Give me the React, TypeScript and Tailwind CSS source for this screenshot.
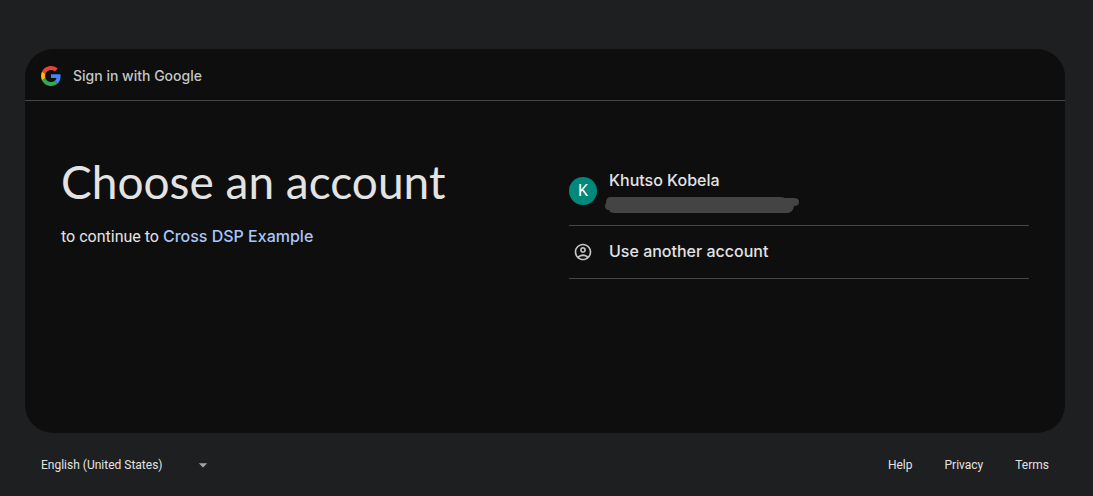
import { MdArrowDropDown, MdOutlineAccountCircle } from "react-icons/md";

function GoogleLogo() {
  return (
    <svg viewBox="0 0 48 48" className="size-5 shrink-0" aria-hidden="true">
      <path fill="#EA4335" d="M24 9.5c3.54 0 6.71 1.22 9.21 3.6l6.85-6.85C35.9 2.38 30.47 0 24 0 14.62 0 6.51 5.38 2.56 13.22l7.98 6.19C12.43 13.72 17.74 9.5 24 9.5z" />
      <path fill="#4285F4" d="M46.98 24.55c0-1.57-.15-3.09-.38-4.55H24v9.02h12.94c-.58 2.96-2.26 5.48-4.78 7.18l7.73 6c4.51-4.18 7.09-10.36 7.09-17.65z" />
      <path fill="#FBBC05" d="M10.53 28.59c-.48-1.45-.76-2.99-.76-4.59s.27-3.14.76-4.59l-7.98-6.19C.92 16.46 0 20.12 0 24c0 3.88.92 7.54 2.56 10.78l7.97-6.19z" />
      <path fill="#34A853" d="M24 48c6.48 0 11.93-2.13 15.89-5.81l-7.73-6c-2.15 1.45-4.92 2.3-8.16 2.3-6.26 0-11.57-4.22-13.47-9.91l-7.98 6.19C6.51 42.62 14.62 48 24 48z" />
    </svg>
  );
}

function HiddenEmail() {
  return (
    <svg viewBox="0 0 194 16" className="-ml-1 h-4 w-[194px]" aria-hidden="true">
      <path
        fill="#444444"
        d="M5 0H174Q178 0 180 1H189Q194 1 194 5Q194 9 189 9Q188 16 182 16H9Q5 16 4 13Q0 13 0 9Q0 7 1 6Q1 0 5 0Z"
      />
    </svg>
  );
}

function AccountList() {
  return (
    <ul className="text-base font-medium text-[#e3e3e3]">
      <li className="border-b border-[#444746]">
        <button type="button" className="flex w-full items-center gap-3 py-3 text-left">
          <span className="flex size-7 shrink-0 items-center justify-center rounded-full bg-[#00897b] font-['Roboto',sans-serif] text-base font-normal text-white">
            K
          </span>
          <span className="flex flex-col gap-1.5">
            <span className="leading-[22px]">Khutso Kobela</span>
            <HiddenEmail />
          </span>
        </button>
      </li>
      <li className="border-b border-[#444746]">
        <button type="button" className="flex h-[52px] w-full items-center gap-3 text-left">
          <span className="flex w-7 shrink-0 justify-center">
            <MdOutlineAccountCircle className="size-5 text-[#c4c7c5]" />
          </span>
          <span className="pb-0.5">Use another account</span>
        </button>
      </li>
    </ul>
  );
}

export default function App() {
  return (
    <div className="flex min-h-screen flex-col bg-[#1e1f20] pt-[49px] pr-7 pl-[25px] font-['Inter',sans-serif] text-[#e3e3e3]">
      <div className="mx-auto w-full max-w-[1040px]">
        <div className="min-h-96 rounded-[28px] bg-[#0e0e0e]">
          <header className="flex h-[52px] items-center gap-3 border-b border-[#444746] px-4 pt-[3px] text-sm font-medium text-[#c4c7c5]">
            <GoogleLogo />
            Sign in with Google
          </header>
          <main className="grid grid-cols-2 gap-12 px-9 pt-14 pb-9">
            <div>
              <h1 className="font-['Lato',sans-serif] text-[46px] leading-[50px]">Choose an account</h1>
              <p className="mt-[17px] font-['Roboto',sans-serif] text-base leading-6">
                to continue to{" "}
                <a href="#app" className="font-['Inter',sans-serif] font-medium text-[#a8c7fa]">
                  Cross DSP Example
                </a>
              </p>
            </div>
            <AccountList />
          </main>
        </div>
        <footer className="flex items-center justify-between px-4 pt-5 font-['Roboto',sans-serif] text-xs">
          <div className="flex items-center">
            <select aria-label="Language" className="h-6 w-[152px] appearance-none bg-transparent">
              <option>English (United States)</option>
            </select>
            <MdArrowDropDown className="size-5 text-[#a3a6a5]" />
          </div>
          <nav className="flex gap-8">
            <a href="#help">Help</a>
            <a href="#privacy">Privacy</a>
            <a href="#terms">Terms</a>
          </nav>
        </footer>
      </div>
    </div>
  );
}
